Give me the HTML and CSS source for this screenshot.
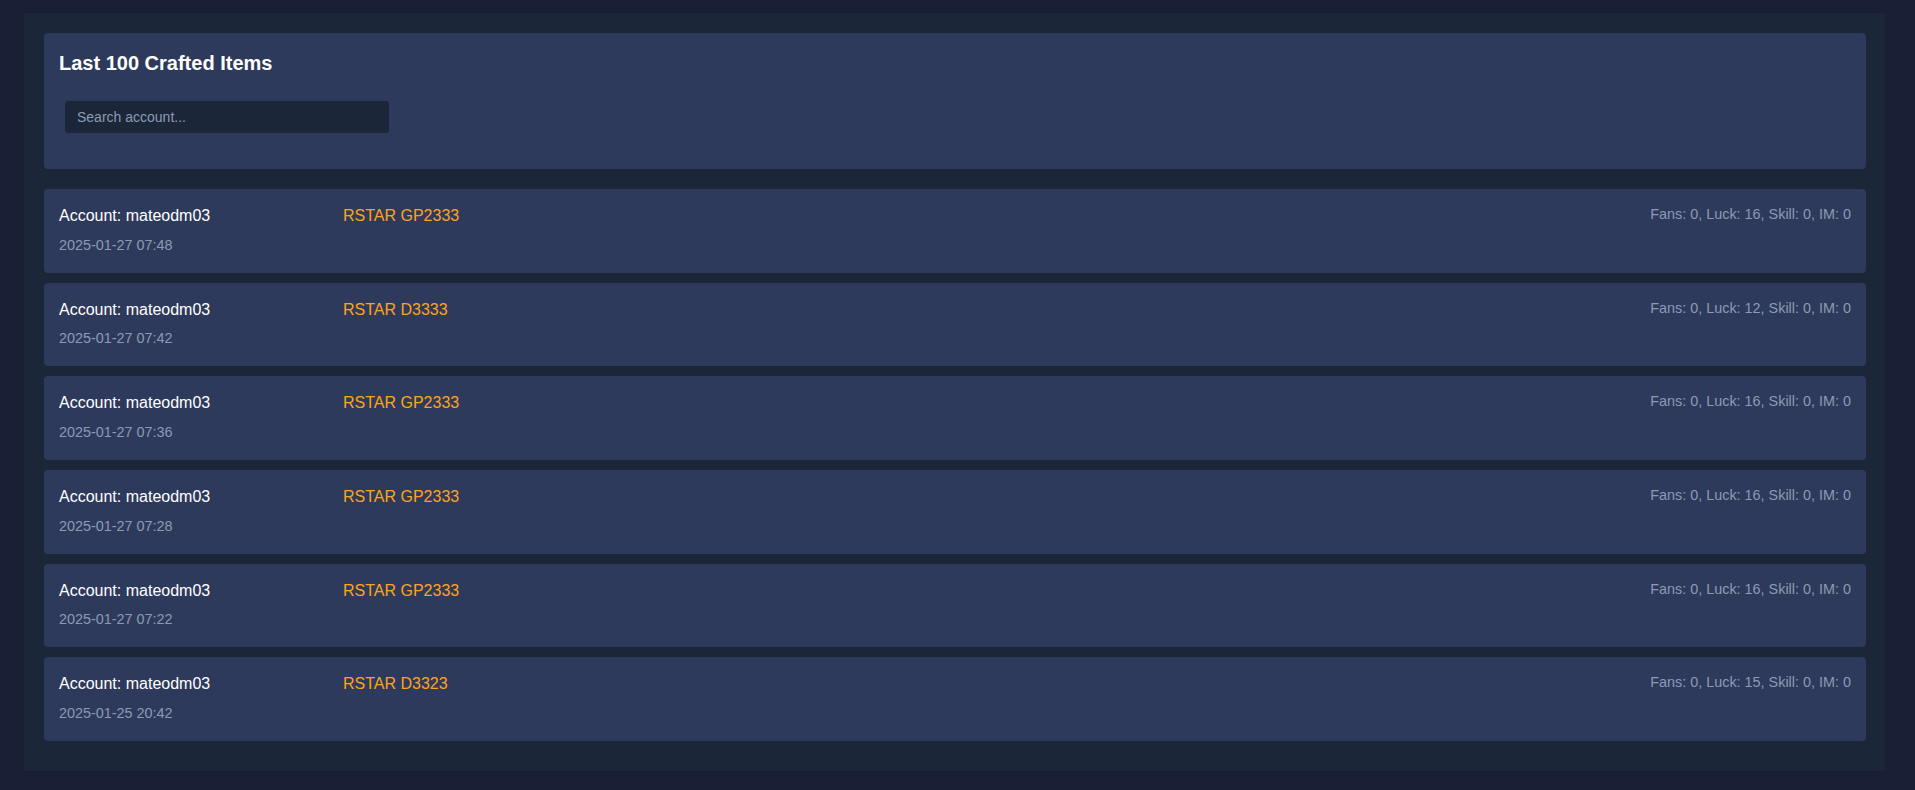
FILE: index.html
```html
<!DOCTYPE html>
<html lang="en">
<head>
  <meta charset="UTF-8">
  <meta name="viewport" content="width=device-width, initial-scale=1.0">
  <title>Last 100 Crafted Items</title>
  <link rel="stylesheet" href="styles.css">
</head>
<body>
  <div class="container">
    <div class="panel header-panel">
      <h2>Last 100 Crafted Items</h2>
      <input type="text" id="search" class="search" placeholder="Search account...">
    </div>

    <div id="craftList">
      <div class="panel craft-row">
        <div class="craft-main">
          <div class="account-col">
            <div class="account">Account: mateodm03</div>
            <div class="date">2025-01-27 07:48</div>
          </div>
          <div class="item-name">RSTAR GP2333</div>
        </div>
        <div class="stats">Fans: 0, Luck: 16, Skill: 0, IM: 0</div>
      </div>

      <div class="panel craft-row">
        <div class="craft-main">
          <div class="account-col">
            <div class="account">Account: mateodm03</div>
            <div class="date">2025-01-27 07:42</div>
          </div>
          <div class="item-name">RSTAR D3333</div>
        </div>
        <div class="stats">Fans: 0, Luck: 12, Skill: 0, IM: 0</div>
      </div>

      <div class="panel craft-row">
        <div class="craft-main">
          <div class="account-col">
            <div class="account">Account: mateodm03</div>
            <div class="date">2025-01-27 07:36</div>
          </div>
          <div class="item-name">RSTAR GP2333</div>
        </div>
        <div class="stats">Fans: 0, Luck: 16, Skill: 0, IM: 0</div>
      </div>

      <div class="panel craft-row">
        <div class="craft-main">
          <div class="account-col">
            <div class="account">Account: mateodm03</div>
            <div class="date">2025-01-27 07:28</div>
          </div>
          <div class="item-name">RSTAR GP2333</div>
        </div>
        <div class="stats">Fans: 0, Luck: 16, Skill: 0, IM: 0</div>
      </div>

      <div class="panel craft-row">
        <div class="craft-main">
          <div class="account-col">
            <div class="account">Account: mateodm03</div>
            <div class="date">2025-01-27 07:22</div>
          </div>
          <div class="item-name">RSTAR GP2333</div>
        </div>
        <div class="stats">Fans: 0, Luck: 16, Skill: 0, IM: 0</div>
      </div>

      <div class="panel craft-row">
        <div class="craft-main">
          <div class="account-col">
            <div class="account">Account: mateodm03</div>
            <div class="date">2025-01-25 20:42</div>
          </div>
          <div class="item-name">RSTAR D3323</div>
        </div>
        <div class="stats">Fans: 0, Luck: 15, Skill: 0, IM: 0</div>
      </div>
    </div>
  </div>
</body>
</html>
```

FILE: styles.css
```css
body {
  font-family: "Liberation Sans", Arial, sans-serif;
  margin: 0;
  padding: 13px 30px 19px 24px;
  background-color: #1b1f36;
  color: #fff;
  line-height: 1.6;
}

.container {
  background-color: #1c2639;
  padding: 20px 19px 20px 20px;
}

.panel {
  background-color: #2e3a5b;
  border-radius: 4px;
  padding: 15px;
}

.header-panel {
  margin-bottom: 20px;
  padding-bottom: 15px;
}

h2 {
  font-size: 20px;
  line-height: 23px;
  margin: 4px 0 26px;
}

.search {
  display: block;
  width: 324px;
  height: 32px;
  box-sizing: border-box;
  margin: 0 0 21px 6px;
  padding: 0 12px;
  border: none;
  border-radius: 3px;
  background-color: #1c2639;
  color: #fff;
  font-family: inherit;
  font-size: 14px;
}

.search::placeholder {
  color: #8b9bb3;
}

.craft-row {
  display: flex;
  justify-content: space-between;
  align-items: flex-start;
  margin-bottom: 10px;
  padding-top: 14px;
  padding-bottom: 16px;
}

.craft-main {
  display: flex;
  align-items: flex-start;
}

.account-col {
  width: 284px;
}

.account {
  font-size: 16px;
}

.date {
  font-size: 0.9em;
  color: #8b9bb3;
  margin-top: 5px;
}

.item-name {
  font-size: 16px;
  color: #ffa31a;
}

.stats {
  font-size: 0.9em;
  color: #8b9bb3;
}
```
